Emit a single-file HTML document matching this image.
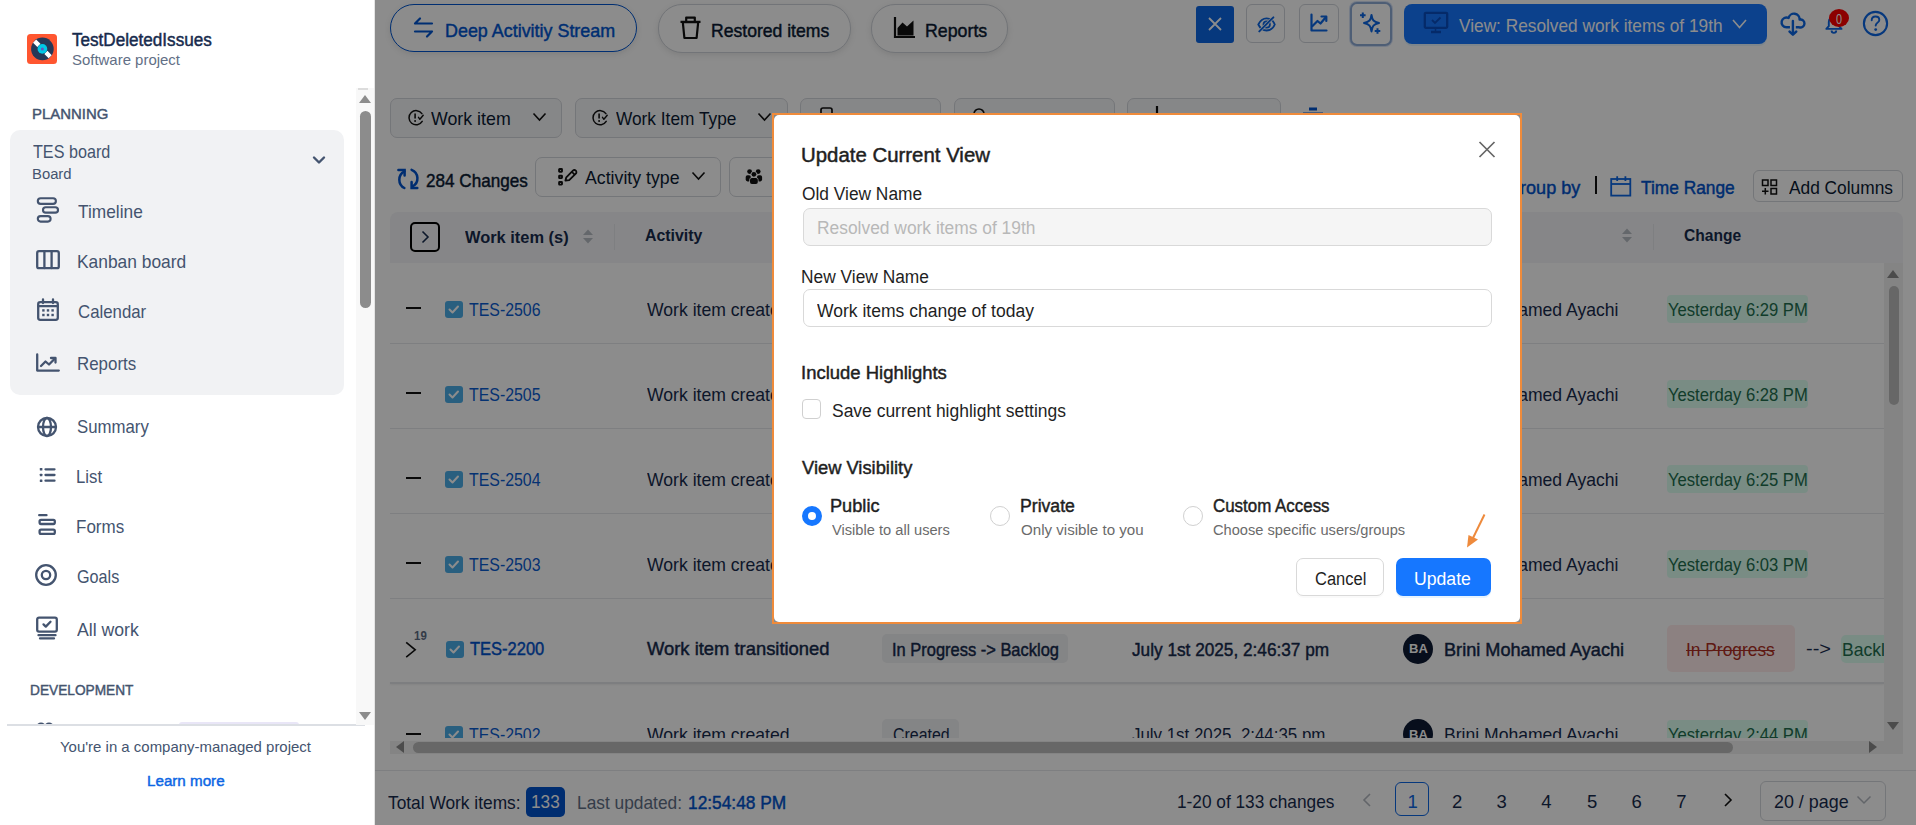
<!DOCTYPE html>
<html><head><meta charset="utf-8"><title>Update Current View</title>
<style>
html,body{margin:0;padding:0;}
body{width:1916px;height:825px;overflow:hidden;position:relative;background:#fff;font-family:"Liberation Sans", sans-serif;}

</style></head><body style="">
<div style="position:absolute;left:0px;top:0px;width:375px;height:825px;background:#fff;"></div>
<svg style="position:absolute;left:27px;top:34px;" width="30" height="30" viewBox="0 0 30 30" fill="none">
<rect x="0" y="0" width="30" height="30" rx="3.5" fill="#ff5630"/>
<circle cx="15.4" cy="14.9" r="11.3" fill="#253858"/>
<path d="M11.9 11.4 L7.6 7.1 M18.9 18.4 L23.2 22.7" stroke="#fff" stroke-width="4.4" stroke-linecap="butt"/>
<circle cx="15.4" cy="14.9" r="4.85" fill="#00c7e6"/>
<circle cx="15.4" cy="14.9" r="1.5" fill="#6554c0"/>
</svg>
<span style="position:absolute;left:72.00px;top:32.48px;font-size:17.5px;line-height:17.5px;font-weight:400;color:#172b4d;white-space:pre;-webkit-text-stroke:0.45px #172b4d;transform:scaleX(0.9774);transform-origin:0 0;">TestDeletedIssues</span>
<span style="position:absolute;left:72.00px;top:53.18px;font-size:14.2px;line-height:14.2px;font-weight:400;color:#626f86;white-space:pre;transform:scaleX(1.0529);transform-origin:0 0;">Software project</span>
<span style="position:absolute;left:31.64px;top:106.38px;font-size:15.5px;line-height:15.5px;font-weight:400;color:#44546f;white-space:pre;-webkit-text-stroke:0.45px #44546f;transform:scaleX(0.9626);transform-origin:0 0;">PLANNING</span>
<div style="position:absolute;left:10px;top:130px;width:334px;height:265px;background:#f1f2f4;border-radius:10px;"></div>
<span style="position:absolute;left:33.00px;top:143.04px;font-size:18.5px;line-height:18.5px;font-weight:400;color:#44546f;white-space:pre;transform:scaleX(0.8735);transform-origin:0 0;">TES board</span>
<span style="position:absolute;left:32.04px;top:166.28px;font-size:15.5px;line-height:15.5px;font-weight:400;color:#44546f;white-space:pre;transform:scaleX(0.9562);transform-origin:0 0;">Board</span>
<svg style="position:absolute;left:312px;top:155px;" width="14" height="10" viewBox="0 0 14 10" fill="none"><path d="M2 2.5 L7 7.5 L12 2.5" stroke="#44546f" stroke-width="2.4" stroke-linecap="round" stroke-linejoin="round"/></svg>
<svg style="position:absolute;left:36px;top:197px;" width="24" height="27" viewBox="0 0 24 27" fill="none">
<rect x="1.8" y="1.2" width="18.1" height="5.7" rx="2.85" stroke="#44546f" stroke-width="2.1"/>
<rect x="7" y="10.2" width="15" height="5.4" rx="2.7" stroke="#44546f" stroke-width="2.1"/>
<rect x="1.8" y="19.1" width="12.8" height="5.5" rx="2.75" stroke="#44546f" stroke-width="2.1"/>
</svg>
<span style="position:absolute;left:78.00px;top:202.94px;font-size:18.5px;line-height:18.5px;font-weight:400;color:#44546f;white-space:pre;transform:scaleX(0.9357);transform-origin:0 0;">Timeline</span>
<svg style="position:absolute;left:35px;top:249px;" width="26" height="22" viewBox="0 0 26 22" fill="none">
<rect x="2.2" y="2.2" width="21.6" height="17" rx="1.8" stroke="#44546f" stroke-width="2.3" fill="none" stroke-linecap="round" stroke-linejoin="round"/>
<path d="M9.4 2.5 V19 M16.6 2.5 V19" stroke="#44546f" stroke-width="2.3" fill="none" stroke-linecap="round" stroke-linejoin="round"/>
</svg>
<span style="position:absolute;left:77.06px;top:253.04px;font-size:18.5px;line-height:18.5px;font-weight:400;color:#44546f;white-space:pre;transform:scaleX(0.9395);transform-origin:0 0;">Kanban board</span>
<svg style="position:absolute;left:36px;top:298px;" width="24" height="24" viewBox="0 0 24 24" fill="none">
<rect x="2.2" y="4.2" width="19.6" height="17.6" rx="2" stroke="#44546f" stroke-width="2.3" fill="none" stroke-linecap="round" stroke-linejoin="round"/>
<path d="M2.5 8.2 H21.5" stroke="#44546f" stroke-width="2.3" fill="none" stroke-linecap="round" stroke-linejoin="round" stroke-width="3.2"/>
<path d="M7 1.5 V5 M17 1.5 V5" stroke="#44546f" stroke-width="2.3" fill="none" stroke-linecap="round" stroke-linejoin="round"/>
<g fill="#44546f" stroke="none">
<rect x="6.2" y="11.2" width="2.4" height="2.4"/><rect x="10.8" y="11.2" width="2.4" height="2.4"/><rect x="15.4" y="11.2" width="2.4" height="2.4"/>
<rect x="6.2" y="15.8" width="2.4" height="2.4"/><rect x="10.8" y="15.8" width="2.4" height="2.4"/><rect x="15.4" y="15.8" width="2.4" height="2.4"/>
</g>
</svg>
<span style="position:absolute;left:78.00px;top:303.04px;font-size:18.5px;line-height:18.5px;font-weight:400;color:#44546f;white-space:pre;transform:scaleX(0.9077);transform-origin:0 0;">Calendar</span>
<svg style="position:absolute;left:35px;top:353px;" width="26" height="20" viewBox="0 0 26 20" fill="none">
<path d="M2.2 1.5 V17.6 H23.8" stroke="#44546f" stroke-width="2.3" fill="none" stroke-linecap="round" stroke-linejoin="round"/>
<path d="M6 13 L10.5 8.5 L14 11.5 L20 5.5" stroke="#44546f" stroke-width="2.3" fill="none" stroke-linecap="round" stroke-linejoin="round"/>
<path d="M16 5 H20.5 V9.5" stroke="#44546f" stroke-width="2.3" fill="none" stroke-linecap="round" stroke-linejoin="round"/>
</svg>
<span style="position:absolute;left:77.09px;top:355.04px;font-size:18.5px;line-height:18.5px;font-weight:400;color:#44546f;white-space:pre;transform:scaleX(0.9130);transform-origin:0 0;">Reports</span>
<svg style="position:absolute;left:36px;top:416px;" width="22" height="22" viewBox="0 0 22 22" fill="none">
<circle cx="11" cy="11" r="9" stroke="#44546f" stroke-width="2.3" fill="none" stroke-linecap="round" stroke-linejoin="round"/>
<ellipse cx="11" cy="11" rx="4" ry="9" stroke="#44546f" stroke-width="2.3" fill="none" stroke-linecap="round" stroke-linejoin="round"/>
<path d="M2.2 11 H19.8" stroke="#44546f" stroke-width="2.3" fill="none" stroke-linecap="round" stroke-linejoin="round"/>
</svg>
<span style="position:absolute;left:77.00px;top:418.34px;font-size:18.5px;line-height:18.5px;font-weight:400;color:#44546f;white-space:pre;transform:scaleX(0.9074);transform-origin:0 0;">Summary</span>
<svg style="position:absolute;left:38px;top:466px;" width="20" height="18" viewBox="0 0 20 18" fill="none">
<g fill="#44546f"><rect x="1.8" y="2" width="2.6" height="2.6" rx="0.6"/><rect x="1.8" y="7.7" width="2.6" height="2.6" rx="0.6"/><rect x="1.8" y="13.4" width="2.6" height="2.6" rx="0.6"/></g>
<path d="M7.5 3.3 H16.5 M7.5 9 H16.5 M7.5 14.7 H16.5" stroke="#44546f" stroke-width="2.3" fill="none" stroke-linecap="round" stroke-linejoin="round"/>
</svg>
<span style="position:absolute;left:76.10px;top:468.34px;font-size:18.5px;line-height:18.5px;font-weight:400;color:#44546f;white-space:pre;transform:scaleX(0.9042);transform-origin:0 0;">List</span>
<svg style="position:absolute;left:37px;top:513px;" width="20" height="23" viewBox="0 0 20 23" fill="none">
<path d="M2.2 2.2 H9.5" stroke="#44546f" stroke-width="2.3" fill="none" stroke-linecap="round" stroke-linejoin="round" stroke-width="2"/>
<rect x="2.6" y="6.8" width="15.2" height="4.2" rx="1.4" stroke="#44546f" stroke-width="2.3" fill="none" stroke-linecap="round" stroke-linejoin="round" stroke-width="2"/>
<rect x="2.6" y="16.6" width="15.2" height="4.2" rx="1.4" stroke="#44546f" stroke-width="2.3" fill="none" stroke-linecap="round" stroke-linejoin="round" stroke-width="2"/>
</svg>
<span style="position:absolute;left:76.08px;top:518.34px;font-size:18.5px;line-height:18.5px;font-weight:400;color:#44546f;white-space:pre;transform:scaleX(0.9187);transform-origin:0 0;">Forms</span>
<svg style="position:absolute;left:34px;top:563px;" width="24" height="24" viewBox="0 0 24 24" fill="none">
<circle cx="12" cy="12" r="9.8" stroke="#44546f" stroke-width="2.3" fill="none" stroke-linecap="round" stroke-linejoin="round"/>
<circle cx="12" cy="12" r="4.2" stroke="#44546f" stroke-width="2.3" fill="none" stroke-linecap="round" stroke-linejoin="round"/>
</svg>
<span style="position:absolute;left:77.00px;top:568.34px;font-size:18.5px;line-height:18.5px;font-weight:400;color:#44546f;white-space:pre;transform:scaleX(0.8736);transform-origin:0 0;">Goals</span>
<svg style="position:absolute;left:35px;top:616px;" width="24" height="24" viewBox="0 0 24 24" fill="none">
<rect x="2.2" y="1.6" width="19.6" height="14" rx="1.8" stroke="#44546f" stroke-width="2.3" fill="none" stroke-linecap="round" stroke-linejoin="round"/>
<path d="M8.5 8.4 L10.8 10.6 L15.5 5.8" stroke="#44546f" stroke-width="2.3" fill="none" stroke-linecap="round" stroke-linejoin="round" stroke-width="2"/>
<path d="M3.5 19.2 H20.5 M5 22.4 H19" stroke="#44546f" stroke-width="2.3" fill="none" stroke-linecap="round" stroke-linejoin="round"/>
</svg>
<span style="position:absolute;left:77.00px;top:620.84px;font-size:18.5px;line-height:18.5px;font-weight:400;color:#44546f;white-space:pre;transform:scaleX(0.9541);transform-origin:0 0;">All work</span>
<span style="position:absolute;left:30.12px;top:681.58px;font-size:15.5px;line-height:15.5px;font-weight:400;color:#44546f;white-space:pre;-webkit-text-stroke:0.45px #44546f;transform:scaleX(0.8829);transform-origin:0 0;">DEVELOPMENT</span>
<svg style="position:absolute;left:36px;top:721px;" width="18" height="4" viewBox="0 0 18 4" fill="none"><circle cx="5" cy="6" r="3.5" stroke="#44546f" stroke-width="2.2"/><circle cx="13" cy="6" r="3.5" stroke="#44546f" stroke-width="2.2"/></svg>
<div style="position:absolute;left:179px;top:722px;width:120px;height:3px;background:#e9e6f7;border-radius:3px 3px 0 0;"></div>
<div style="position:absolute;left:7px;top:724px;width:358px;height:1.5px;background:#dcdfe4;"></div>
<div style="position:absolute;left:0px;top:726px;width:356px;height:99px;background:#fff;"></div>
<span style="position:absolute;left:59.60px;top:738.50px;font-size:15px;line-height:15px;font-weight:400;color:#44546f;white-space:pre;transform:scaleX(0.9974);transform-origin:0 0;">You&#x27;re in a company-managed project</span>
<span style="position:absolute;left:147.02px;top:773.38px;font-size:15.5px;line-height:15.5px;font-weight:400;color:#0c66e4;white-space:pre;-webkit-text-stroke:0.45px #0c66e4;transform:scaleX(0.9788);transform-origin:0 0;">Learn more</span>
<div style="position:absolute;left:356px;top:88px;width:18px;height:637px;background:#f8f8f8;"></div>
<div style="position:absolute;left:358px;top:88px;width:10px;height:2px;background:#dcdcdc;"></div>
<svg style="position:absolute;left:358px;top:93px;" width="14" height="11" viewBox="0 0 14 11" fill="none"><path d="M1 10 L7 2 L13 10 Z" fill="#8c8c8c"/></svg>
<div style="position:absolute;left:360px;top:110.5px;width:11px;height:197px;background:#8c8c8c;border-radius:6px;"></div>
<svg style="position:absolute;left:358px;top:711px;" width="14" height="10" viewBox="0 0 14 10" fill="none"><path d="M1 1 L7 9 L13 1 Z" fill="#8c8c8c"/></svg>
<div style="position:absolute;left:373.5px;top:0px;width:1.5px;height:825px;background:#e4e4e4;"></div>
<div style="position:absolute;left:375px;top:0px;width:1541px;height:825px;background:#fff;"></div>
<div style="position:absolute;left:390px;top:4.1px;width:247px;height:48.3px;box-sizing:border-box;border:1.6px solid #0055d0;border-radius:24px;background:#fff;box-shadow:0 2px 6px rgba(0,0,0,0.10);"></div>
<svg style="position:absolute;left:411px;top:16px;" width="25" height="23" viewBox="0 0 25 23" fill="none"><path d="M4 7.5 H21 M4 7.5 L9 2.5 M21 15.5 H4 M21 15.5 L16 20.5" stroke="#0055d0" stroke-width="2.2" stroke-linecap="round" stroke-linejoin="round"/></svg>
<span style="position:absolute;left:444.83px;top:21.54px;font-size:18.5px;line-height:18.5px;font-weight:400;color:#0055d0;white-space:pre;-webkit-text-stroke:0.45px #0055d0;transform:scaleX(0.9679);transform-origin:0 0;">Deep Activitiy Stream</span>
<div style="position:absolute;left:657.5px;top:4.3px;width:193.5px;height:48.4px;box-sizing:border-box;border:1.3px solid #d0d4da;border-radius:24px;background:#fff;box-shadow:0 2px 6px rgba(0,0,0,0.10);"></div>
<svg style="position:absolute;left:678px;top:15px;" width="25" height="25" viewBox="0 0 25 25" fill="none"><path d="M4.8 7.2 H20.2 L18.6 23 H6.4 Z" stroke="#111" stroke-width="2.2" stroke-linejoin="round"/><path d="M2.5 6.8 H22.5 M8.2 6.5 V2.6 H16.8 V6.5" stroke="#111" stroke-width="2.2" stroke-linejoin="round"/></svg>
<span style="position:absolute;left:711.45px;top:21.74px;font-size:18.5px;line-height:18.5px;font-weight:400;color:#0b1b33;white-space:pre;-webkit-text-stroke:0.45px #0b1b33;transform:scaleX(0.9500);transform-origin:0 0;">Restored items</span>
<div style="position:absolute;left:871px;top:4.3px;width:136.5px;height:48.4px;box-sizing:border-box;border:1.3px solid #d0d4da;border-radius:24px;background:#fff;box-shadow:0 2px 6px rgba(0,0,0,0.10);"></div>
<svg style="position:absolute;left:893px;top:16px;" width="23" height="23" viewBox="0 0 23 23" fill="none"><path d="M2 1 V21 H22" stroke="#111" stroke-width="2.2"/><path d="M4.5 19.5 V12 L9.5 6.5 L14 10.5 L20.5 4.5 V19.5 Z" fill="#111"/></svg>
<span style="position:absolute;left:925.04px;top:21.74px;font-size:18.5px;line-height:18.5px;font-weight:400;color:#0b1b33;white-space:pre;-webkit-text-stroke:0.45px #0b1b33;transform:scaleX(0.9602);transform-origin:0 0;">Reports</span>
<div style="position:absolute;left:1196px;top:6px;width:38px;height:37px;background:#0c66e4;border-radius:3px;"></div>
<svg style="position:absolute;left:1207px;top:16px;" width="16" height="16" viewBox="0 0 16 16" fill="none"><path d="M2 2 L14 14 M14 2 L2 14" stroke="#fff" stroke-width="1.8"/></svg>
<div style="position:absolute;left:1246px;top:4px;width:39px;height:39px;box-sizing:border-box;border:1.3px solid #d0d4da;border-radius:6px;background:#fff;"></div>
<svg style="position:absolute;left:1256px;top:14px;" width="22" height="20" viewBox="0 0 22 20" fill="none"><path d="M2.3 10.5 C4.5 5.8 7.8 4.3 10.6 4.3 C13.6 4.3 16.9 6 18.8 10.5 C16.9 15 13.6 16.5 10.6 16.5 C7.8 16.5 4.5 15 2.3 10.5 Z" stroke="#0c66e4" stroke-width="1.8"/><circle cx="10.7" cy="10.5" r="3.2" stroke="#0c66e4" stroke-width="1.8"/><path d="M3.3 17.4 L17.4 3.3" stroke="#fff" stroke-width="3.2" stroke-linecap="round"/><path d="M3.3 17.4 L17.4 3.3" stroke="#0c66e4" stroke-width="1.9" stroke-linecap="round"/></svg>
<div style="position:absolute;left:1299px;top:4px;width:39.5px;height:39px;box-sizing:border-box;border:1.3px solid #d0d4da;border-radius:6px;background:#fff;"></div>
<svg style="position:absolute;left:1309px;top:13px;" width="20" height="20" viewBox="0 0 20 20" fill="none"><path d="M2.5 1.5 V17.5 H17.5" stroke="#0c66e4" stroke-width="2.2" stroke-linecap="round" stroke-linejoin="round"/><path d="M3.5 13 L8.5 8 L11.5 10.5 L17 4" stroke="#0c66e4" stroke-width="2.2" stroke-linecap="round" stroke-linejoin="round"/><path d="M12.5 3.5 H17.3 V8" stroke="#0c66e4" stroke-width="2.2" stroke-linecap="round" stroke-linejoin="round"/></svg>
<div style="position:absolute;left:1350px;top:2px;width:42px;height:43.5px;box-sizing:border-box;border:2.3px solid #8fabd6;border-radius:7px;background:#fff;box-shadow:0 0 0 1px rgba(80,130,220,.25);"></div>
<svg style="position:absolute;left:1358px;top:11px;" width="26" height="25" viewBox="0 0 26 25" fill="none"><path d="M13.5 4 C14.2 9.3 15.6 10.7 21 12 C15.6 13.3 14.2 14.7 13.5 20.5 C12.8 14.7 11.4 13.3 6 12 C11.4 10.7 12.8 9.3 13.5 4 Z" stroke="#0c66e4" stroke-width="2" stroke-linejoin="round"/><path d="M4.8 1.5 V7 M2 4.2 H7.6 M19.5 17.2 V22.8 M16.7 20 H22.3" stroke="#0c66e4" stroke-width="2"/></svg>
<div style="position:absolute;left:1404px;top:4px;width:363px;height:40px;background:#1677ff;border-radius:8px;box-shadow:0 2px 0 rgba(5,145,255,.1);"></div>
<svg style="position:absolute;left:1423px;top:11px;" width="27" height="23" viewBox="0 0 27 23" fill="none"><rect x="1.8" y="1.8" width="22.4" height="15" rx="1" stroke="#0a4dc0" stroke-width="2.3"/><path d="M9 9 L12 12 L17.5 6.5" stroke="#0a4dc0" stroke-width="1.8"/><path d="M8 21 H18" stroke="#0a4dc0" stroke-width="2.5"/><path d="M12.5 17 V20" stroke="#0a4dc0" stroke-width="1.5"/></svg>
<span style="position:absolute;left:1459.00px;top:17.93px;font-size:17.8px;line-height:17.8px;font-weight:400;color:#fff;white-space:pre;transform:scaleX(0.9709);transform-origin:0 0;">View: Resolved work items of 19th</span>
<svg style="position:absolute;left:1731px;top:18px;" width="17" height="12" viewBox="0 0 17 12" fill="none"><path d="M2 2 L8.5 9.5 L15 2" stroke="#fff" stroke-width="1.6"/></svg>
<svg style="position:absolute;left:1776px;top:8px;" width="34" height="32" viewBox="0 0 34 32" fill="none"><path d="M13.95 19.3 H10.5 A4.9 4.9 0 1 1 12.57 9.96 A5.6 5.6 0 0 1 23.6 11.6 A4 4 0 1 1 23.2 19.3 H19.8" stroke="#0c66e4" stroke-width="2.4" stroke-linejoin="round"/><path d="M16.9 13 V25.8" stroke="#0c66e4" stroke-width="2.4" stroke-linecap="round"/><path d="M13.6 23.6 L16.9 26.6 L20.2 23.6" stroke="#0c66e4" stroke-width="2.6" stroke-linecap="round" stroke-linejoin="round"/></svg>
<svg style="position:absolute;left:1822px;top:13px;" width="24" height="22" viewBox="0 0 24 22" fill="none"><path d="M4.3 15.9 H19.5 L17 13.2 V9 C17 5.8 14.8 3.8 11.9 3.8 C9 3.8 6.8 5.8 6.8 9 V13.2 Z" stroke="#0c66e4" stroke-width="1.9" stroke-linejoin="round"/><path d="M9.6 17.6 A2.3 2.3 0 0 0 14.2 17.6" stroke="#0c66e4" stroke-width="1.9"/></svg>
<div style="position:absolute;left:1829px;top:8.8px;width:20px;height:18px;background:#ff0000;border-radius:50%;"></div>
<span style="position:absolute;left:1836.00px;top:11.65px;font-size:14px;line-height:14px;font-weight:400;color:#fff;white-space:pre;transform:scaleX(0.7750);transform-origin:0 0;">0</span>
<svg style="position:absolute;left:1861px;top:9px;" width="29" height="29" viewBox="0 0 29 29" fill="none"><circle cx="14.5" cy="14.5" r="11.6" stroke="#0c66e4" stroke-width="2.1"/><path d="M10.7 11.3 C10.7 8.9 12.4 7.5 14.5 7.5 C16.7 7.5 18.3 8.9 18.3 10.9 C18.3 13.4 14.7 13.9 14.7 16.6" stroke="#0c66e4" stroke-width="1.9" stroke-linecap="round"/><circle cx="14.7" cy="20.6" r="1.4" fill="#0c66e4"/></svg>
<div style="position:absolute;left:390px;top:98px;width:172px;height:40px;box-sizing:border-box;border:1.3px solid #d4d7dc;border-radius:7px;background:#f5f6f8;"></div>
<svg style="position:absolute;left:405.5px;top:109px;" width="20" height="18" viewBox="0 0 20 18" fill="none"><path d="M15.9 4.6 A7.1 7.1 0 1 0 16.2 12.4" stroke="#111" stroke-width="1.5" stroke-linecap="round"/><path d="M9.1 4.6 V9.4" stroke="#111" stroke-width="1.6"/><circle cx="9.1" cy="12" r="0.95" fill="#111"/><path d="M12.5 8.3 L13.9 10.3 L17.2 6.3" stroke="#111" stroke-width="1.4" stroke-linecap="round" stroke-linejoin="round"/></svg>
<span style="position:absolute;left:431.00px;top:109.84px;font-size:18.5px;line-height:18.5px;font-weight:400;color:#0b1b33;white-space:pre;transform:scaleX(0.9612);transform-origin:0 0;">Work item</span>
<svg style="position:absolute;left:531.5px;top:112px;" width="15" height="10" viewBox="0 0 15 10" fill="none"><path d="M1.5 1.5 L7.5 8 L13.5 1.5" stroke="#111" stroke-width="1.6"/></svg>
<div style="position:absolute;left:574.6px;top:98px;width:213px;height:40px;box-sizing:border-box;border:1.3px solid #d4d7dc;border-radius:7px;background:#f5f6f8;"></div>
<svg style="position:absolute;left:590px;top:109px;" width="20" height="18" viewBox="0 0 20 18" fill="none"><path d="M15.9 4.6 A7.1 7.1 0 1 0 16.2 12.4" stroke="#111" stroke-width="1.5" stroke-linecap="round"/><path d="M9.1 4.6 V9.4" stroke="#111" stroke-width="1.6"/><circle cx="9.1" cy="12" r="0.95" fill="#111"/><path d="M12.5 8.3 L13.9 10.3 L17.2 6.3" stroke="#111" stroke-width="1.4" stroke-linecap="round" stroke-linejoin="round"/></svg>
<span style="position:absolute;left:616.00px;top:109.84px;font-size:18.5px;line-height:18.5px;font-weight:400;color:#0b1b33;white-space:pre;transform:scaleX(0.9340);transform-origin:0 0;">Work Item Type</span>
<svg style="position:absolute;left:757px;top:112px;" width="15" height="10" viewBox="0 0 15 10" fill="none"><path d="M1.5 1.5 L7.5 8 L13.5 1.5" stroke="#111" stroke-width="1.6"/></svg>
<div style="position:absolute;left:800px;top:98px;width:141px;height:40px;box-sizing:border-box;border:1.3px solid #d4d7dc;border-radius:7px;background:#f5f6f8;"></div>
<div style="position:absolute;left:954px;top:98px;width:161px;height:40px;box-sizing:border-box;border:1.3px solid #d4d7dc;border-radius:7px;background:#f5f6f8;"></div>
<div style="position:absolute;left:1127px;top:98px;width:154px;height:40px;box-sizing:border-box;border:1.3px solid #d4d7dc;border-radius:7px;background:#f5f6f8;"></div>
<svg style="position:absolute;left:819px;top:106px;" width="60" height="14" viewBox="0 0 60 14" fill="none"><rect x="2" y="2" width="11" height="14" rx="2" stroke="#111" stroke-width="1.7"/><path d="M25 9 H36" stroke="#111" stroke-width="2"/></svg>
<svg style="position:absolute;left:972px;top:106px;" width="60" height="14" viewBox="0 0 60 14" fill="none"><circle cx="7" cy="8" r="5" stroke="#111" stroke-width="1.7"/><path d="M20 10 H54" stroke="#111" stroke-width="2"/></svg>
<svg style="position:absolute;left:1152px;top:104px;" width="40" height="14" viewBox="0 0 40 14" fill="none"><path d="M5 2 V14" stroke="#111" stroke-width="2.2"/><path d="M14 12 H30" stroke="#111" stroke-width="2"/></svg>
<svg style="position:absolute;left:1302px;top:106px;" width="22" height="10" viewBox="0 0 22 10" fill="none"><path d="M1 8 H21 M7 3 H15" stroke="#0052cc" stroke-width="3"/></svg>
<svg style="position:absolute;left:396px;top:167px;" width="24" height="24" viewBox="0 0 24 24" fill="none"><path d="M8.4 4.3 A9.4 9.4 0 0 0 8.4 21" stroke="#0052cc" stroke-width="2.5" stroke-linecap="round"/><path d="M2.4 3 H8.6 V8.4" stroke="#0052cc" stroke-width="2.5" stroke-linecap="round" stroke-linejoin="miter"/><path d="M15.6 2.8 A9.15 9.15 0 0 1 16.4 19.5" stroke="#0052cc" stroke-width="2.5" stroke-linecap="round"/><path d="M15.6 15 V20.9 H21.3" stroke="#0052cc" stroke-width="2.5" stroke-linecap="round" stroke-linejoin="miter"/></svg>
<span style="position:absolute;left:425.70px;top:171.31px;font-size:19px;line-height:19px;font-weight:400;color:#0b1b33;white-space:pre;-webkit-text-stroke:0.45px #0b1b33;transform:scaleX(0.9002);transform-origin:0 0;">284 Changes</span>
<div style="position:absolute;left:535px;top:157px;width:186px;height:40px;box-sizing:border-box;border:1.3px solid #d4d7dc;border-radius:7px;background:#fff;"></div>
<svg style="position:absolute;left:556px;top:168px;" width="24" height="20" viewBox="0 0 24 20" fill="none"><rect x="3.1" y="1" width="2.9" height="2.8" rx=".5" stroke="#111" stroke-width="1.9"/><rect x="3.1" y="7.8" width="2.9" height="2.3" rx=".5" stroke="#111" stroke-width="1.9"/><rect x="3.1" y="14" width="2.9" height="2.6" rx=".5" stroke="#111" stroke-width="1.9"/><path d="M9.4 12.6 L10.3 9.3 L16.9 2.7 C17.7 1.9 19 1.9 19.8 2.7 C20.6 3.5 20.6 4.8 19.8 5.6 L13.2 12.1 Z" stroke="#111" stroke-width="1.8" stroke-linejoin="round"/><path d="M15.9 3.9 L18.6 6.6" stroke="#111" stroke-width="1.6"/></svg>
<span style="position:absolute;left:585.00px;top:169.04px;font-size:18.5px;line-height:18.5px;font-weight:400;color:#0b1b33;white-space:pre;transform:scaleX(0.9583);transform-origin:0 0;">Activity type</span>
<svg style="position:absolute;left:690.5px;top:171px;" width="15" height="10" viewBox="0 0 15 10" fill="none"><path d="M1.5 1.5 L7.5 8 L13.5 1.5" stroke="#111" stroke-width="1.6"/></svg>
<div style="position:absolute;left:729px;top:157px;width:180px;height:40px;box-sizing:border-box;border:1.3px solid #d4d7dc;border-radius:7px;background:#fff;"></div>
<svg style="position:absolute;left:744px;top:167px;" width="20" height="19" viewBox="0 0 20 19" fill="none"><circle cx="5.6" cy="4.6" r="2.4" fill="#111"/><circle cx="14.2" cy="4.6" r="2.4" fill="#111"/><rect x="1.7" y="8.2" width="5.1" height="6.2" rx="1.8" fill="#111"/><rect x="13" y="8.2" width="5.1" height="6.2" rx="1.8" fill="#111"/><circle cx="9.9" cy="7.3" r="3.05" fill="#fff"/><rect x="5.3" y="10.4" width="9.2" height="7.3" rx="2.4" fill="#fff"/><circle cx="9.9" cy="7.3" r="2.35" fill="#111"/><rect x="6" y="11.1" width="7.8" height="5.9" rx="1.9" fill="#111"/></svg>
<span style="position:absolute;left:1506.00px;top:179.04px;font-size:18.5px;line-height:18.5px;font-weight:400;color:#0052cc;white-space:pre;-webkit-text-stroke:0.45px #0052cc;transform:scaleX(0.9760);transform-origin:0 0;">Group by</span>
<div style="position:absolute;left:1595px;top:176px;width:1.8px;height:18px;background:#111;"></div>
<svg style="position:absolute;left:1609px;top:174px;" width="24" height="24" viewBox="0 0 24 24" fill="none"><rect x="2.2" y="5" width="19.1" height="16.6" stroke="#0c66e4" stroke-width="1.8"/><path d="M2.5 10 H21.2" stroke="#0c66e4" stroke-width="1.8"/><path d="M8.2 2.3 V7 M16.4 2.3 V7" stroke="#0c66e4" stroke-width="1.8"/></svg>
<span style="position:absolute;left:1640.60px;top:179.04px;font-size:18.5px;line-height:18.5px;font-weight:400;color:#0052cc;white-space:pre;-webkit-text-stroke:0.45px #0052cc;transform:scaleX(0.9360);transform-origin:0 0;">Time Range</span>
<div style="position:absolute;left:1753px;top:170px;width:149.5px;height:31.5px;box-sizing:border-box;border:1.3px solid #d4d7dc;border-radius:6px;background:#fff;"></div>
<svg style="position:absolute;left:1760px;top:178px;" width="20" height="18" viewBox="0 0 20 18" fill="none"><rect x="2.5" y="2" width="5.5" height="5.5" stroke="#111" stroke-width="1.5"/><rect x="11" y="2" width="5.5" height="5.5" stroke="#111" stroke-width="1.5"/><rect x="11" y="10.5" width="5.5" height="5.5" stroke="#111" stroke-width="1.5"/><path d="M5.3 10 V16.5 M2 13.2 H8.5" stroke="#111" stroke-width="1.5"/></svg>
<span style="position:absolute;left:1789.30px;top:179.04px;font-size:18.5px;line-height:18.5px;font-weight:400;color:#0b1b33;white-space:pre;transform:scaleX(0.9359);transform-origin:0 0;">Add Columns</span>
<div style="position:absolute;left:390px;top:212px;width:1512.5px;height:51px;background:#f4f5f7;border-radius:8px 8px 0 0;"></div>
<div style="position:absolute;left:410px;top:222px;width:30px;height:30px;box-sizing:border-box;border:2px solid #000;border-radius:5px;"></div>
<svg style="position:absolute;left:418px;top:230px;" width="14" height="14" viewBox="0 0 14 14" fill="none"><path d="M4.5 1.5 L10 7 L4.5 12.5" stroke="#172b4d" stroke-width="1.6"/></svg>
<span style="position:absolute;left:465.20px;top:228.83px;font-size:16.5px;line-height:16.5px;font-weight:700;color:#172b4d;white-space:pre;transform:scaleX(0.9940);transform-origin:0 0;">Work item (s)</span>
<svg style="position:absolute;left:581.5px;top:228px;" width="12" height="17" viewBox="0 0 12 17" fill="none"><path d="M1 7 L6 1.5 L11 7 Z M1 10 L6 15.5 L11 10 Z" fill="#b7bcc4"/></svg>
<div style="position:absolute;left:613.5px;top:224px;width:1px;height:26px;background:#e6e8eb;"></div>
<span style="position:absolute;left:645.30px;top:227.33px;font-size:16.5px;line-height:16.5px;font-weight:700;color:#172b4d;white-space:pre;transform:scaleX(0.9632);transform-origin:0 0;">Activity</span>
<svg style="position:absolute;left:1620.5px;top:227px;" width="12" height="17" viewBox="0 0 12 17" fill="none"><path d="M1 7 L6 1.5 L11 7 Z M1 10 L6 15.5 L11 10 Z" fill="#b7bcc4"/></svg>
<div style="position:absolute;left:1653px;top:224px;width:1px;height:26px;background:#e6e8eb;"></div>
<span style="position:absolute;left:1684.40px;top:227.43px;font-size:16.5px;line-height:16.5px;font-weight:700;color:#172b4d;white-space:pre;transform:scaleX(0.9448);transform-origin:0 0;">Change</span>
<div style="position:absolute;left:405.5px;top:306.8px;width:15px;height:2.4px;background:#111;"></div>
<div style="position:absolute;left:445px;top:300.5px;width:17.5px;height:17px;background:#4bade8;border-radius:3px;"></div>
<svg style="position:absolute;left:445px;top:300.5px;" width="17.5" height="17" viewBox="0 0 17.5 17" fill="none"><path d="M4.5 8.5 L7.5 11.5 L13 5.5" stroke="#fff" stroke-width="2" stroke-linecap="round" stroke-linejoin="round"/></svg>
<span style="position:absolute;left:469.30px;top:301.04px;font-size:18.5px;line-height:18.5px;font-weight:400;color:#0a5bd0;white-space:pre;transform:scaleX(0.8590);transform-origin:0 0;">TES-2506</span>
<span style="position:absolute;left:647.00px;top:301.04px;font-size:18.5px;line-height:18.5px;font-weight:400;color:#172b4d;white-space:pre;transform:scaleX(0.9513);transform-origin:0 0;">Work item created</span>
<div style="position:absolute;left:882px;top:294.5px;width:78px;height:29px;background:#f1f2f4;border-radius:4px;"></div>
<span style="position:absolute;left:893.00px;top:301.88px;font-size:17.5px;line-height:17.5px;font-weight:400;color:#172b4d;white-space:pre;transform:scaleX(0.9102);transform-origin:0 0;">Created</span>
<span style="position:absolute;left:1132.00px;top:301.04px;font-size:18.5px;line-height:18.5px;font-weight:400;color:#172b4d;white-space:pre;transform:scaleX(0.9270);transform-origin:0 0;">July 1st 2025, 2:44:35 pm</span>
<div style="position:absolute;left:1403px;top:294px;width:30px;height:30px;background:#172b4d;border-radius:50%;"></div>
<span style="position:absolute;left:1444.05px;top:301.04px;font-size:18.5px;line-height:18.5px;font-weight:400;color:#172b4d;white-space:pre;transform:scaleX(0.9494);transform-origin:0 0;">Brini Mohamed Ayachi</span>
<div style="position:absolute;left:1667px;top:295px;width:140.5px;height:27.7px;background:#dcfff1;border-radius:4px;"></div>
<span style="position:absolute;left:1668.00px;top:301.04px;font-size:18.5px;line-height:18.5px;font-weight:400;color:#216e4e;white-space:pre;transform:scaleX(0.8981);transform-origin:0 0;">Yesterday 6:29 PM</span>
<div style="position:absolute;left:390px;top:342.6px;width:1494px;height:1.2px;background:#e6e8ec;"></div>
<div style="position:absolute;left:405.5px;top:391.8px;width:15px;height:2.4px;background:#111;"></div>
<div style="position:absolute;left:445px;top:385.5px;width:17.5px;height:17px;background:#4bade8;border-radius:3px;"></div>
<svg style="position:absolute;left:445px;top:385.5px;" width="17.5" height="17" viewBox="0 0 17.5 17" fill="none"><path d="M4.5 8.5 L7.5 11.5 L13 5.5" stroke="#fff" stroke-width="2" stroke-linecap="round" stroke-linejoin="round"/></svg>
<span style="position:absolute;left:469.30px;top:386.04px;font-size:18.5px;line-height:18.5px;font-weight:400;color:#0a5bd0;white-space:pre;transform:scaleX(0.8590);transform-origin:0 0;">TES-2505</span>
<span style="position:absolute;left:647.00px;top:386.04px;font-size:18.5px;line-height:18.5px;font-weight:400;color:#172b4d;white-space:pre;transform:scaleX(0.9513);transform-origin:0 0;">Work item created</span>
<div style="position:absolute;left:882px;top:379.5px;width:78px;height:29px;background:#f1f2f4;border-radius:4px;"></div>
<span style="position:absolute;left:893.00px;top:386.88px;font-size:17.5px;line-height:17.5px;font-weight:400;color:#172b4d;white-space:pre;transform:scaleX(0.9102);transform-origin:0 0;">Created</span>
<span style="position:absolute;left:1132.00px;top:386.04px;font-size:18.5px;line-height:18.5px;font-weight:400;color:#172b4d;white-space:pre;transform:scaleX(0.9270);transform-origin:0 0;">July 1st 2025, 2:44:35 pm</span>
<div style="position:absolute;left:1403px;top:379px;width:30px;height:30px;background:#172b4d;border-radius:50%;"></div>
<span style="position:absolute;left:1444.05px;top:386.04px;font-size:18.5px;line-height:18.5px;font-weight:400;color:#172b4d;white-space:pre;transform:scaleX(0.9494);transform-origin:0 0;">Brini Mohamed Ayachi</span>
<div style="position:absolute;left:1667px;top:380px;width:140.5px;height:27.7px;background:#dcfff1;border-radius:4px;"></div>
<span style="position:absolute;left:1668.00px;top:386.04px;font-size:18.5px;line-height:18.5px;font-weight:400;color:#216e4e;white-space:pre;transform:scaleX(0.8981);transform-origin:0 0;">Yesterday 6:28 PM</span>
<div style="position:absolute;left:390px;top:427.6px;width:1494px;height:1.2px;background:#e6e8ec;"></div>
<div style="position:absolute;left:405.5px;top:476.8px;width:15px;height:2.4px;background:#111;"></div>
<div style="position:absolute;left:445px;top:470.5px;width:17.5px;height:17px;background:#4bade8;border-radius:3px;"></div>
<svg style="position:absolute;left:445px;top:470.5px;" width="17.5" height="17" viewBox="0 0 17.5 17" fill="none"><path d="M4.5 8.5 L7.5 11.5 L13 5.5" stroke="#fff" stroke-width="2" stroke-linecap="round" stroke-linejoin="round"/></svg>
<span style="position:absolute;left:469.30px;top:471.04px;font-size:18.5px;line-height:18.5px;font-weight:400;color:#0a5bd0;white-space:pre;transform:scaleX(0.8590);transform-origin:0 0;">TES-2504</span>
<span style="position:absolute;left:647.00px;top:471.04px;font-size:18.5px;line-height:18.5px;font-weight:400;color:#172b4d;white-space:pre;transform:scaleX(0.9513);transform-origin:0 0;">Work item created</span>
<div style="position:absolute;left:882px;top:464.5px;width:78px;height:29px;background:#f1f2f4;border-radius:4px;"></div>
<span style="position:absolute;left:893.00px;top:471.88px;font-size:17.5px;line-height:17.5px;font-weight:400;color:#172b4d;white-space:pre;transform:scaleX(0.9102);transform-origin:0 0;">Created</span>
<span style="position:absolute;left:1132.00px;top:471.04px;font-size:18.5px;line-height:18.5px;font-weight:400;color:#172b4d;white-space:pre;transform:scaleX(0.9270);transform-origin:0 0;">July 1st 2025, 2:44:35 pm</span>
<div style="position:absolute;left:1403px;top:464px;width:30px;height:30px;background:#172b4d;border-radius:50%;"></div>
<span style="position:absolute;left:1444.05px;top:471.04px;font-size:18.5px;line-height:18.5px;font-weight:400;color:#172b4d;white-space:pre;transform:scaleX(0.9494);transform-origin:0 0;">Brini Mohamed Ayachi</span>
<div style="position:absolute;left:1667px;top:465px;width:140.5px;height:27.7px;background:#dcfff1;border-radius:4px;"></div>
<span style="position:absolute;left:1668.00px;top:471.04px;font-size:18.5px;line-height:18.5px;font-weight:400;color:#216e4e;white-space:pre;transform:scaleX(0.8981);transform-origin:0 0;">Yesterday 6:25 PM</span>
<div style="position:absolute;left:390px;top:512.6px;width:1494px;height:1.2px;background:#e6e8ec;"></div>
<div style="position:absolute;left:405.5px;top:561.8px;width:15px;height:2.4px;background:#111;"></div>
<div style="position:absolute;left:445px;top:555.5px;width:17.5px;height:17px;background:#4bade8;border-radius:3px;"></div>
<svg style="position:absolute;left:445px;top:555.5px;" width="17.5" height="17" viewBox="0 0 17.5 17" fill="none"><path d="M4.5 8.5 L7.5 11.5 L13 5.5" stroke="#fff" stroke-width="2" stroke-linecap="round" stroke-linejoin="round"/></svg>
<span style="position:absolute;left:469.30px;top:556.04px;font-size:18.5px;line-height:18.5px;font-weight:400;color:#0a5bd0;white-space:pre;transform:scaleX(0.8590);transform-origin:0 0;">TES-2503</span>
<span style="position:absolute;left:647.00px;top:556.04px;font-size:18.5px;line-height:18.5px;font-weight:400;color:#172b4d;white-space:pre;transform:scaleX(0.9513);transform-origin:0 0;">Work item created</span>
<div style="position:absolute;left:882px;top:549.5px;width:78px;height:29px;background:#f1f2f4;border-radius:4px;"></div>
<span style="position:absolute;left:893.00px;top:556.88px;font-size:17.5px;line-height:17.5px;font-weight:400;color:#172b4d;white-space:pre;transform:scaleX(0.9102);transform-origin:0 0;">Created</span>
<span style="position:absolute;left:1132.00px;top:556.04px;font-size:18.5px;line-height:18.5px;font-weight:400;color:#172b4d;white-space:pre;transform:scaleX(0.9270);transform-origin:0 0;">July 1st 2025, 2:44:35 pm</span>
<div style="position:absolute;left:1403px;top:549px;width:30px;height:30px;background:#172b4d;border-radius:50%;"></div>
<span style="position:absolute;left:1444.05px;top:556.04px;font-size:18.5px;line-height:18.5px;font-weight:400;color:#172b4d;white-space:pre;transform:scaleX(0.9494);transform-origin:0 0;">Brini Mohamed Ayachi</span>
<div style="position:absolute;left:1667px;top:550px;width:140.5px;height:27.7px;background:#dcfff1;border-radius:4px;"></div>
<span style="position:absolute;left:1668.00px;top:556.04px;font-size:18.5px;line-height:18.5px;font-weight:400;color:#216e4e;white-space:pre;transform:scaleX(0.8981);transform-origin:0 0;">Yesterday 6:03 PM</span>
<div style="position:absolute;left:390px;top:597.6px;width:1494px;height:1.2px;background:#e6e8ec;"></div>
<svg style="position:absolute;left:403px;top:640px;" width="16" height="19" viewBox="0 0 16 19" fill="none"><path d="M3.2 2.3 L12.2 9.8 L3.2 17.2" stroke="#111" stroke-width="1.6"/></svg>
<span style="position:absolute;left:414.00px;top:630.32px;font-size:12.5px;line-height:12.5px;font-weight:700;color:#5e6c84;white-space:pre;transform:scaleX(0.9174);transform-origin:0 0;">19</span>
<div style="position:absolute;left:446px;top:641px;width:17.5px;height:17px;background:#4bade8;border-radius:3px;"></div>
<svg style="position:absolute;left:446px;top:641px;" width="17.5" height="17" viewBox="0 0 17.5 17" fill="none"><path d="M4.5 8.5 L7.5 11.5 L13 5.5" stroke="#fff" stroke-width="2" stroke-linecap="round" stroke-linejoin="round"/></svg>
<span style="position:absolute;left:470.20px;top:640.34px;font-size:18.5px;line-height:18.5px;font-weight:400;color:#0052cc;white-space:pre;-webkit-text-stroke:0.45px #0052cc;transform:scaleX(0.8915);transform-origin:0 0;">TES-2200</span>
<span style="position:absolute;left:646.80px;top:640.34px;font-size:18.5px;line-height:18.5px;font-weight:400;color:#172b4d;white-space:pre;-webkit-text-stroke:0.45px #172b4d;transform:scaleX(0.9934);transform-origin:0 0;">Work item transitioned</span>
<div style="position:absolute;left:882.4px;top:634px;width:186px;height:29px;background:#f1f2f4;border-radius:5px;"></div>
<span style="position:absolute;left:892.06px;top:641.78px;font-size:17.5px;line-height:17.5px;font-weight:400;color:#172b4d;white-space:pre;-webkit-text-stroke:0.45px #172b4d;transform:scaleX(0.9404);transform-origin:0 0;">In Progress -&gt; Backlog</span>
<span style="position:absolute;left:1132.00px;top:640.54px;font-size:18.5px;line-height:18.5px;font-weight:400;color:#172b4d;white-space:pre;-webkit-text-stroke:0.45px #172b4d;transform:scaleX(0.9303);transform-origin:0 0;">July 1st 2025, 2:46:37 pm</span>
<div style="position:absolute;left:1403px;top:634px;width:30px;height:30px;background:#0d1a33;border-radius:50%;"></div>
<span style="position:absolute;left:1408.50px;top:642.17px;font-size:13.5px;line-height:13.5px;font-weight:700;color:#fff;white-space:pre;transform:scaleX(0.9621);transform-origin:0 0;">BA</span>
<span style="position:absolute;left:1444.02px;top:640.54px;font-size:18.5px;line-height:18.5px;font-weight:400;color:#172b4d;white-space:pre;-webkit-text-stroke:0.45px #172b4d;transform:scaleX(0.9801);transform-origin:0 0;">Brini Mohamed Ayachi</span>
<div style="position:absolute;left:1667.3px;top:624.7px;width:127.7px;height:47.7px;background:#ffeceb;border-radius:5px;"></div>
<span style="position:absolute;left:1686.01px;top:641.78px;font-size:17.5px;line-height:17.5px;font-weight:400;color:#ae2e24;white-space:pre;transform:scaleX(0.9917);transform-origin:0 0;text-decoration:line-through;">In Progress</span>
<span style="position:absolute;left:1805.70px;top:641.28px;font-size:17.5px;line-height:17.5px;font-weight:400;color:#172b4d;white-space:pre;transform:scaleX(1.1406);transform-origin:0 0;">--&gt;</span>
<div style="position:absolute;left:1841px;top:635px;width:43px;height:28px;background:#dcfff1;border-radius:5px 0 0 5px;"></div>
<span style="position:absolute;left:1842.05px;top:640.94px;font-size:18.5px;line-height:18.5px;font-weight:400;color:#216e4e;white-space:pre;transform:scaleX(0.9507);transform-origin:0 0;">Backl</span>
<div style="position:absolute;left:390px;top:682px;width:1494px;height:2px;background:#e4e6ea;box-shadow:0 1px 2px rgba(0,0,0,.06);"></div>
<div style="position:absolute;left:375px;top:684px;width:1509px;height:54px;overflow:hidden;">
<div style="position:absolute;left:-375px;top:-684px;width:1916px;height:825px;">
<div style="position:absolute;left:405.5px;top:732.8px;width:15px;height:2.4px;background:#111;"></div>
<div style="position:absolute;left:445px;top:725.5px;width:17.5px;height:17px;background:#4bade8;border-radius:3px;"></div>
<svg style="position:absolute;left:445px;top:725.5px;" width="17.5" height="17" viewBox="0 0 17.5 17" fill="none"><path d="M4.5 8.5 L7.5 11.5 L13 5.5" stroke="#fff" stroke-width="2" stroke-linecap="round" stroke-linejoin="round"/></svg>
<span style="position:absolute;left:469.30px;top:726.04px;font-size:18.5px;line-height:18.5px;font-weight:400;color:#0a5bd0;white-space:pre;transform:scaleX(0.8590);transform-origin:0 0;">TES-2502</span>
<span style="position:absolute;left:647.00px;top:726.04px;font-size:18.5px;line-height:18.5px;font-weight:400;color:#172b4d;white-space:pre;transform:scaleX(0.9513);transform-origin:0 0;">Work item created</span>
<div style="position:absolute;left:882.4px;top:719px;width:77px;height:29px;background:#f1f2f4;border-radius:5px;"></div>
<span style="position:absolute;left:893.00px;top:727.38px;font-size:17.5px;line-height:17.5px;font-weight:400;color:#172b4d;white-space:pre;transform:scaleX(0.9102);transform-origin:0 0;">Created</span>
<span style="position:absolute;left:1132.00px;top:726.04px;font-size:18.5px;line-height:18.5px;font-weight:400;color:#172b4d;white-space:pre;transform:scaleX(0.9128);transform-origin:0 0;">July 1st 2025, 2:44:35 pm</span>
<div style="position:absolute;left:1403px;top:719px;width:30px;height:30px;background:#0d1a33;border-radius:50%;"></div>
<span style="position:absolute;left:1408.50px;top:728.27px;font-size:13.5px;line-height:13.5px;font-weight:700;color:#fff;white-space:pre;transform:scaleX(0.9621);transform-origin:0 0;">BA</span>
<span style="position:absolute;left:1444.05px;top:726.04px;font-size:18.5px;line-height:18.5px;font-weight:400;color:#172b4d;white-space:pre;transform:scaleX(0.9494);transform-origin:0 0;">Brini Mohamed Ayachi</span>
<div style="position:absolute;left:1667px;top:720px;width:140.5px;height:27.7px;background:#dcfff1;border-radius:4px;"></div>
<span style="position:absolute;left:1668.00px;top:726.04px;font-size:18.5px;line-height:18.5px;font-weight:400;color:#216e4e;white-space:pre;transform:scaleX(0.8981);transform-origin:0 0;">Yesterday 2:44 PM</span>
</div></div>
<div style="position:absolute;left:1884px;top:263px;width:19px;height:478px;background:#f1f1f1;"></div>
<svg style="position:absolute;left:1886px;top:268px;" width="14" height="11" viewBox="0 0 14 11" fill="none"><path d="M1 10 L7 2 L13 10 Z" fill="#8a8a8a"/></svg>
<div style="position:absolute;left:1888.5px;top:285.5px;width:10.7px;height:119px;background:#bcbcbc;border-radius:6px;"></div>
<svg style="position:absolute;left:1886px;top:721px;" width="14" height="11" viewBox="0 0 14 11" fill="none"><path d="M1 1 L7 9 L13 1 Z" fill="#8a8a8a"/></svg>
<div style="position:absolute;left:390px;top:740.5px;width:1513px;height:13px;background:#f1f1f1;"></div>
<svg style="position:absolute;left:394px;top:740px;" width="11" height="14" viewBox="0 0 11 14" fill="none"><path d="M10 1 L2 7 L10 13 Z" fill="#8a8a8a"/></svg>
<div style="position:absolute;left:413px;top:741.5px;width:1320px;height:11px;background:#bcbcbc;border-radius:6px;"></div>
<svg style="position:absolute;left:1868px;top:740px;" width="11" height="14" viewBox="0 0 11 14" fill="none"><path d="M1 1 L9 7 L1 13 Z" fill="#8a8a8a"/></svg>
<div style="position:absolute;left:375px;top:769.5px;width:1541px;height:1.2px;background:#e6e8eb;"></div>
<span style="position:absolute;left:388.30px;top:793.64px;font-size:18.5px;line-height:18.5px;font-weight:400;color:#172b4d;white-space:pre;transform:scaleX(0.9367);transform-origin:0 0;">Total Work items:</span>
<div style="position:absolute;left:525.8px;top:786.8px;width:39px;height:30px;background:#0052cc;border-radius:5px;"></div>
<span style="position:absolute;left:530.57px;top:792.94px;font-size:18.5px;line-height:18.5px;font-weight:400;color:#fff;white-space:pre;transform:scaleX(0.9298);transform-origin:0 0;">133</span>
<span style="position:absolute;left:577.46px;top:793.64px;font-size:18.5px;line-height:18.5px;font-weight:400;color:#626f86;white-space:pre;transform:scaleX(0.9365);transform-origin:0 0;">Last updated:</span>
<span style="position:absolute;left:688.06px;top:793.64px;font-size:18.5px;line-height:18.5px;font-weight:400;color:#0052cc;white-space:pre;-webkit-text-stroke:0.45px #0052cc;transform:scaleX(0.9367);transform-origin:0 0;">12:54:48 PM</span>
<span style="position:absolute;left:1177.07px;top:792.64px;font-size:18.5px;line-height:18.5px;font-weight:400;color:#172b4d;white-space:pre;transform:scaleX(0.9329);transform-origin:0 0;">1-20 of 133 changes</span>
<svg style="position:absolute;left:1359px;top:791px;" width="16" height="18" viewBox="0 0 16 18" fill="none"><path d="M11 3 L5 9 L11 15" stroke="#b3b8c0" stroke-width="1.6"/></svg>
<div style="position:absolute;left:1395px;top:782.3px;width:34.2px;height:34.1px;box-sizing:border-box;border:1.5px solid #0c66e4;border-radius:6px;background:#fff;"></div>
<span style="position:absolute;left:1407.50px;top:792.64px;font-size:18.5px;line-height:18.5px;font-weight:400;color:#0c66e4;white-space:pre;">1</span>
<span style="position:absolute;left:1452.00px;top:792.64px;font-size:18.5px;line-height:18.5px;font-weight:400;color:#172b4d;white-space:pre;">2</span>
<span style="position:absolute;left:1496.60px;top:792.64px;font-size:18.5px;line-height:18.5px;font-weight:400;color:#172b4d;white-space:pre;">3</span>
<span style="position:absolute;left:1541.30px;top:792.64px;font-size:18.5px;line-height:18.5px;font-weight:400;color:#172b4d;white-space:pre;">4</span>
<span style="position:absolute;left:1587.00px;top:792.64px;font-size:18.5px;line-height:18.5px;font-weight:400;color:#172b4d;white-space:pre;">5</span>
<span style="position:absolute;left:1631.60px;top:792.64px;font-size:18.5px;line-height:18.5px;font-weight:400;color:#172b4d;white-space:pre;">6</span>
<span style="position:absolute;left:1676.30px;top:792.64px;font-size:18.5px;line-height:18.5px;font-weight:400;color:#172b4d;white-space:pre;">7</span>
<svg style="position:absolute;left:1720px;top:791px;" width="16" height="18" viewBox="0 0 16 18" fill="none"><path d="M5 3 L11 9 L5 15" stroke="#111" stroke-width="1.6"/></svg>
<div style="position:absolute;left:1760px;top:781px;width:126px;height:39.6px;box-sizing:border-box;border:1.3px solid #d4d7dc;border-radius:6px;background:#fff;"></div>
<span style="position:absolute;left:1774.00px;top:792.64px;font-size:18.5px;line-height:18.5px;font-weight:400;color:#172b4d;white-space:pre;transform:scaleX(0.9666);transform-origin:0 0;">20 / page</span>
<svg style="position:absolute;left:1856px;top:795px;" width="16" height="10" viewBox="0 0 16 10" fill="none"><path d="M1.5 1.5 L8 8 L14.5 1.5" stroke="#b3b8c0" stroke-width="1.5"/></svg>
<div style="position:absolute;left:375px;top:0px;width:1541px;height:825px;background:rgba(0,0,0,0.45);"></div>
<div style="position:absolute;left:772px;top:113px;width:750px;height:511px;box-sizing:border-box;border:2px solid #ef8b3b;"></div>
<div style="position:absolute;left:774px;top:115px;width:746px;height:507px;background:#fff;border-radius:5px;"></div>
<span style="position:absolute;left:800.75px;top:145.89px;font-size:19.5px;line-height:19.5px;font-weight:400;color:#1f1f1f;white-space:pre;-webkit-text-stroke:0.45px #1f1f1f;transform:scaleX(1.0461);transform-origin:0 0;">Update Current View</span>
<svg style="position:absolute;left:1477px;top:140px;" width="20" height="19" viewBox="0 0 20 19" fill="none"><path d="M2.5 2 L17.5 17 M17.5 2 L2.5 17" stroke="#666" stroke-width="1.7"/></svg>
<span style="position:absolute;left:801.80px;top:185.26px;font-size:18px;line-height:18px;font-weight:400;color:#1f1f1f;white-space:pre;transform:scaleX(0.9631);transform-origin:0 0;">Old View Name</span>
<div style="position:absolute;left:802.5px;top:207.5px;width:689.5px;height:38.2px;box-sizing:border-box;border:1.3px solid #d9d9d9;border-radius:7px;background:#f5f5f5;"></div>
<span style="position:absolute;left:816.53px;top:219.46px;font-size:18px;line-height:18px;font-weight:400;color:#b8b8b8;white-space:pre;transform:scaleX(0.9661);transform-origin:0 0;">Resolved work items of 19th</span>
<span style="position:absolute;left:800.74px;top:267.96px;font-size:18px;line-height:18px;font-weight:400;color:#1f1f1f;white-space:pre;transform:scaleX(0.9643);transform-origin:0 0;">New View Name</span>
<div style="position:absolute;left:802.5px;top:289.3px;width:689.5px;height:38.1px;box-sizing:border-box;border:1.3px solid #d9d9d9;border-radius:7px;background:#fff;"></div>
<span style="position:absolute;left:816.80px;top:301.76px;font-size:18px;line-height:18px;font-weight:400;color:#1f1f1f;white-space:pre;transform:scaleX(0.9741);transform-origin:0 0;">Work items change of today</span>
<span style="position:absolute;left:800.67px;top:364.06px;font-size:18px;line-height:18px;font-weight:400;color:#1f1f1f;white-space:pre;-webkit-text-stroke:0.45px #1f1f1f;transform:scaleX(1.0263);transform-origin:0 0;">Include Highlights</span>
<div style="position:absolute;left:801.8px;top:399.4px;width:19.2px;height:19.2px;box-sizing:border-box;border:1.3px solid #d0d0d0;border-radius:4px;background:#fff;"></div>
<span style="position:absolute;left:831.50px;top:402.06px;font-size:18px;line-height:18px;font-weight:400;color:#1f1f1f;white-space:pre;transform:scaleX(0.9704);transform-origin:0 0;">Save current highlight settings</span>
<span style="position:absolute;left:801.70px;top:459.26px;font-size:18px;line-height:18px;font-weight:400;color:#1f1f1f;white-space:pre;-webkit-text-stroke:0.45px #1f1f1f;transform:scaleX(1.0177);transform-origin:0 0;">View Visibility</span>
<div style="position:absolute;left:801.7px;top:505.9px;width:19.9px;height:19.9px;box-sizing:border-box;border:6px solid #1677ff;border-radius:50%;background:#fff;"></div>
<span style="position:absolute;left:830.49px;top:497.26px;font-size:18px;line-height:18px;font-weight:400;color:#1f1f1f;white-space:pre;-webkit-text-stroke:0.45px #1f1f1f;transform:scaleX(1.0099);transform-origin:0 0;">Public</span>
<span style="position:absolute;left:831.50px;top:522.23px;font-size:15.2px;line-height:15.2px;font-weight:400;color:#6b6b6b;white-space:pre;transform:scaleX(0.9647);transform-origin:0 0;">Visible to all users</span>
<div style="position:absolute;left:990px;top:505.9px;width:19.9px;height:19.9px;box-sizing:border-box;border:1.3px solid #d0d0d0;border-radius:50%;background:#fff;"></div>
<span style="position:absolute;left:1019.72px;top:497.26px;font-size:18px;line-height:18px;font-weight:400;color:#1f1f1f;white-space:pre;-webkit-text-stroke:0.45px #1f1f1f;transform:scaleX(0.9798);transform-origin:0 0;">Private</span>
<span style="position:absolute;left:1020.70px;top:522.23px;font-size:15.2px;line-height:15.2px;font-weight:400;color:#6b6b6b;white-space:pre;transform:scaleX(0.9951);transform-origin:0 0;">Only visible to you</span>
<div style="position:absolute;left:1183.3px;top:505.9px;width:19.9px;height:19.9px;box-sizing:border-box;border:1.3px solid #d0d0d0;border-radius:50%;background:#fff;"></div>
<span style="position:absolute;left:1213.00px;top:497.26px;font-size:18px;line-height:18px;font-weight:400;color:#1f1f1f;white-space:pre;-webkit-text-stroke:0.45px #1f1f1f;transform:scaleX(0.9398);transform-origin:0 0;">Custom Access</span>
<span style="position:absolute;left:1213.00px;top:522.23px;font-size:15.2px;line-height:15.2px;font-weight:400;color:#6b6b6b;white-space:pre;transform:scaleX(0.9643);transform-origin:0 0;">Choose specific users/groups</span>
<svg style="position:absolute;left:1462px;top:512px;" width="26" height="38" viewBox="0 0 26 38" fill="none"><path d="M22.5 2.5 L10.5 27" stroke="#ee8a3c" stroke-width="2"/><path d="M5 35.5 L6.5 23 L16 27.5 Z" fill="#ee8a3c"/></svg>
<div style="position:absolute;left:1295.6px;top:557.5px;width:88.4px;height:38.5px;box-sizing:border-box;border:1.3px solid #d9d9d9;border-radius:7px;background:#fff;box-shadow:0 2px 0 rgba(0,0,0,.02);"></div>
<span style="position:absolute;left:1314.60px;top:570.26px;font-size:18px;line-height:18px;font-weight:400;color:#1f1f1f;white-space:pre;transform:scaleX(0.9158);transform-origin:0 0;">Cancel</span>
<div style="position:absolute;left:1395.6px;top:557.5px;width:95.6px;height:38.5px;background:#1677ff;border-radius:7px;box-shadow:0 2px 0 rgba(5,145,255,.1);"></div>
<span style="position:absolute;left:1414.42px;top:570.26px;font-size:18px;line-height:18px;font-weight:400;color:#fff;white-space:pre;transform:scaleX(0.9801);transform-origin:0 0;">Update</span>
</body></html>
